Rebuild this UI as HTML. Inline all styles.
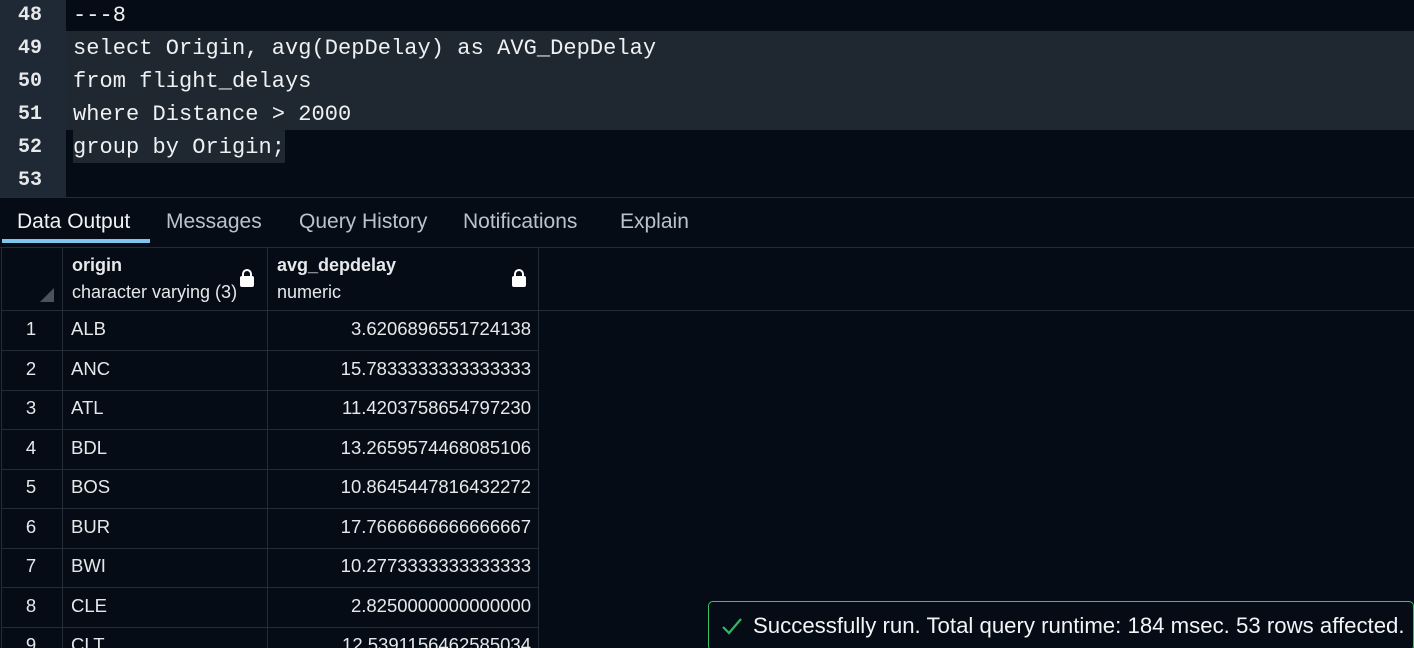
<!DOCTYPE html>
<html><head><style>
*{margin:0;padding:0;box-sizing:border-box}
html,body{width:1414px;height:648px;overflow:hidden}
body{background:#050c16;font-family:"Liberation Sans",sans-serif;color:#e8eaed;position:relative}
.gut{position:absolute;left:0;top:0;width:66px;height:197px;background:#1e2935}
.ln{position:absolute;left:0;width:66px;height:33px;line-height:33px;font:bold 20px "Liberation Mono",monospace;color:#e6e8ea;padding-left:18px}
.code{position:absolute;left:73px;height:33px;line-height:33px;font:22px "Liberation Mono",monospace;color:#eef0f2;white-space:pre;letter-spacing:0.05px}
.sel{position:absolute;background:#1f2831}
.tabs{position:absolute;top:197px;left:0;width:1414px;height:51px;border-top:1px solid #222c38;border-bottom:1px solid #222c38}
.tab{position:absolute;top:12px;font-size:21px;color:#b9c3cf}
.ul{position:absolute;left:2px;top:41px;width:148px;height:4px;background:#7fc6ee}
.g{position:absolute;border-color:#232d3a;border-style:solid;border-width:0}
.cell{position:absolute;font-size:18.5px;color:#e6e8ea;height:39.5px;line-height:39.5px}
.lock{position:absolute;width:14px;height:11px;background:#fff;border-radius:2px}
.lock:before{content:"";position:absolute;left:2px;top:-7px;width:6px;height:8px;border:2px solid #fff;border-bottom:none;border-radius:6px 6px 0 0}
.toast{position:absolute;left:708px;top:601px;width:706px;height:50px;border:1px solid #35c46c;border-radius:5px;background:#050c16}
</style></head><body>
<div class="gut"></div>
<div class="sel" style="left:66px;top:31px;width:1348px;height:99px"></div>
<div class="sel" style="left:73px;top:130px;width:212px;height:33px"></div>
<div class="ln" style="top:4px">48</div>
<div class="ln" style="top:37px">49</div>
<div class="ln" style="top:70px">50</div>
<div class="ln" style="top:103px">51</div>
<div class="ln" style="top:136px">52</div>
<div class="ln" style="top:169px">53</div>
<div class="code" style="top:3px">---8</div>
<div class="code" style="top:36px">select Origin, avg(DepDelay) as AVG_DepDelay</div>
<div class="code" style="top:69px">from flight_delays</div>
<div class="code" style="top:102px">where Distance &gt; 2000</div>
<div class="code" style="top:135px">group by Origin;</div>
<div class="tabs">
<div class="tab" style="left:17px;color:#f0f2f4">Data Output</div>
<div class="tab" style="left:166px">Messages</div>
<div class="tab" style="left:299px">Query History</div>
<div class="tab" style="left:463px">Notifications</div>
<div class="tab" style="left:620px">Explain</div>
<div class="ul"></div>
</div>
<div class="g" style="left:1px;top:248px;width:1px;height:400px;border-left-width:1px"></div>
<div class="g" style="left:62px;top:248px;width:1px;height:400px;border-left-width:1px"></div>
<div class="g" style="left:267px;top:248px;width:1px;height:400px;border-left-width:1px"></div>
<div class="g" style="left:538px;top:248px;width:1px;height:400px;border-left-width:1px"></div>
<div class="g" style="left:1px;top:310px;width:1413px;height:1px;border-top-width:1px"></div>
<div style="position:absolute;left:40px;top:288px;width:0;height:0;border-left:14px solid transparent;border-bottom:14px solid #4a525c"></div>
<div class="cell" style="left:72px;top:252px;height:auto;line-height:26px;font-weight:bold;font-size:18px">origin</div>
<div class="cell" style="left:72px;top:279px;height:auto;line-height:26px;font-size:18px">character varying (3)</div>
<div class="cell" style="left:277px;top:252px;height:auto;line-height:26px;font-weight:bold;font-size:18px">avg_depdelay</div>
<div class="cell" style="left:277px;top:279px;height:auto;line-height:26px;font-size:18px">numeric</div>
<div class="lock" style="left:240px;top:276px"></div>
<div class="lock" style="left:512px;top:276px"></div>
<div id="rows"></div>
<script>
var d=[["ALB","3.6206896551724138"],["ANC","15.7833333333333333"],["ATL","11.4203758654797230"],["BDL","13.2659574468085106"],["BOS","10.8645447816432272"],["BUR","17.7666666666666667"],["BWI","10.2773333333333333"],["CLE","2.8250000000000000"],["CLT","12.5391156462585034"]];
var h="";d.forEach(function(r,i){var t=309+i*39.5;
h+='<div class="cell" style="left:0;width:62px;text-align:center;top:'+t+'px">'+(i+1)+'</div>';
h+='<div class="cell" style="left:71px;top:'+t+'px">'+r[0]+'</div>';
h+='<div class="cell" style="left:268px;width:263px;text-align:right;top:'+t+'px">'+r[1]+'</div>';
h+='<div class="g" style="left:1px;width:538px;height:1px;border-top-width:1px;top:'+(t+41)+'px"></div>';});
document.getElementById("rows").innerHTML=h;
</script>
<div class="toast">
<svg style="position:absolute;left:12px;top:14px" width="22" height="20" viewBox="0 0 22 20"><path d="M2 11 L8 17 L20 3" fill="none" stroke="#2fb864" stroke-width="2.2"/></svg>
<div style="position:absolute;left:44px;top:11px;font-size:22.2px;color:#f2f4f6;white-space:nowrap">Successfully run. Total query runtime: 184 msec. 53 rows affected.</div>
</div>
</body></html>
